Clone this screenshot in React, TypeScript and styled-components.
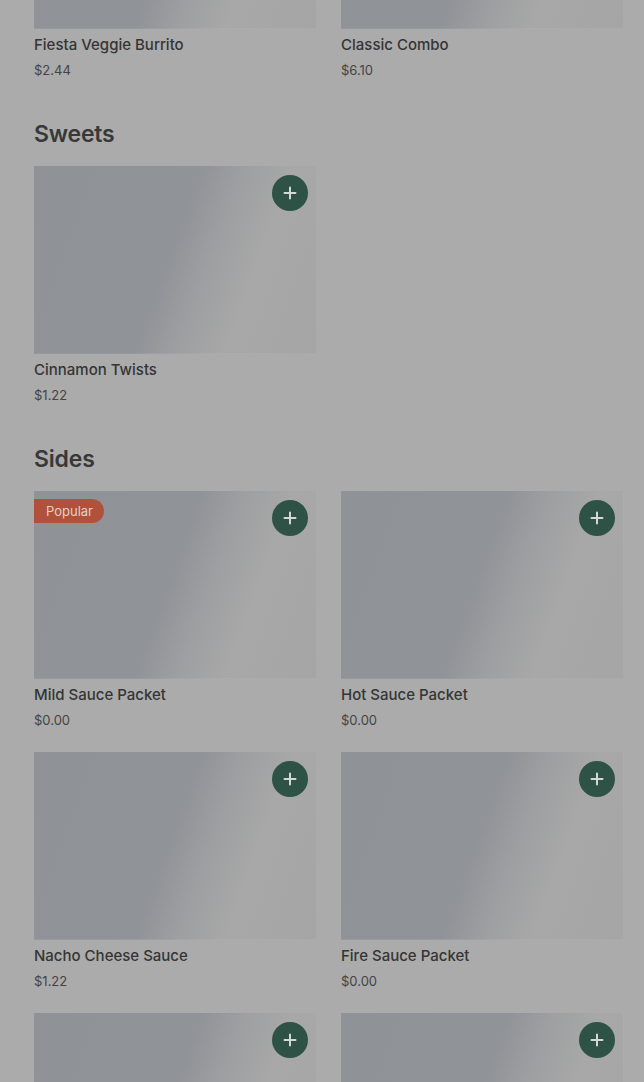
import React from "react";
import styled, { createGlobalStyle } from "styled-components";

const GlobalStyle = createGlobalStyle`
  html, body {
    margin: 0;
    padding: 0;
    background: #ababab;
    overflow: hidden;
  }
  body {
    font-family: Inter, "Liberation Sans", sans-serif;
    color: #363636;
  }
`;

type Item = { name: string; price: string; popular?: boolean };
type Section = { title: string; items: Item[] };

const sections: Section[] = [
  {
    title: "Combos",
    items: [
      { name: "Fiesta Veggie Burrito", price: "$2.44" },
      { name: "Classic Combo", price: "$6.10" },
    ],
  },
  {
    title: "Sweets",
    items: [{ name: "Cinnamon Twists", price: "$1.22" }],
  },
  {
    title: "Sides",
    items: [
      { name: "Mild Sauce Packet", price: "$0.00", popular: true },
      { name: "Hot Sauce Packet", price: "$0.00" },
      { name: "Nacho Cheese Sauce", price: "$1.22" },
      { name: "Fire Sauce Packet", price: "$0.00" },
      { name: "Diablo Sauce Packet", price: "$0.00" },
      { name: "Chips & Salsa", price: "$2.44" },
    ],
  },
];

const Page = styled.main`
  margin-top: -207px;
  padding: 0 20px 0 34px;
  display: flex;
  flex-direction: column;
  gap: 38px;
`;

const SectionBlock = styled.section`
  display: flex;
  flex-direction: column;
`;

const Heading = styled.h2`
  margin: 0 0 16px;
  font-size: 23px;
  line-height: 32px;
  font-weight: 600;
  color: #383838;
  letter-spacing: -0.2px;
`;

const Grid = styled.div`
  display: grid;
  grid-template-columns: repeat(2, 283px);
  column-gap: 24px;
  row-gap: 22px;
`;

const Card = styled.article`
  display: flex;
  flex-direction: column;
`;

const Thumb = styled.div`
  position: relative;
  height: 188px;
  background: linear-gradient(
    110deg,
    #8f9297 0%,
    #909398 48%,
    #9e9fa1 60%,
    #a8a8a8 74%,
    #a5a5a5 100%
  );
  box-shadow: inset -1px -1px 0 rgba(255, 255, 255, 0.06);
`;

const AddButton = styled.button`
  position: absolute;
  top: 9px;
  right: 9px;
  width: 36px;
  height: 36px;
  border-radius: 50%;
  border: none;
  padding: 0;
  background: #2e5245;
  display: flex;
  align-items: center;
  justify-content: center;
  cursor: pointer;
`;

const Badge = styled.span`
  position: absolute;
  top: 8px;
  left: 0;
  height: 24px;
  padding: 0 11px 0 12px;
  border-radius: 0 12px 12px 0;
  background: #b0513b;
  color: #e6cfc8;
  font-size: 13px;
  line-height: 24px;
  font-weight: 400;
`;

const Name = styled.div`
  margin-top: 6px;
  font-size: 15px;
  line-height: 20px;
  font-weight: 500;
  color: #353535;
`;

const Price = styled.div`
  margin-top: 5px;
  font-size: 13px;
  line-height: 20px;
  color: #444444;
`;

function Plus() {
  return (
    <svg width="14" height="14" viewBox="0 0 14 14" fill="none">
      <path d="M7 1.5v11M1.5 7h11" stroke="#d4d9d6" strokeWidth="2" strokeLinecap="round" />
    </svg>
  );
}

export default function App() {
  return (
    <>
      <GlobalStyle />
      <Page>
        {sections.map((section) => (
          <SectionBlock key={section.title}>
            <Heading>{section.title}</Heading>
            <Grid>
              {section.items.map((item) => (
                <Card key={item.name}>
                  <Thumb>
                    {item.popular && <Badge>Popular</Badge>}
                    <AddButton aria-label={`Add ${item.name}`}>
                      <Plus />
                    </AddButton>
                  </Thumb>
                  <Name>{item.name}</Name>
                  <Price>{item.price}</Price>
                </Card>
              ))}
            </Grid>
          </SectionBlock>
        ))}
      </Page>
    </>
  );
}
